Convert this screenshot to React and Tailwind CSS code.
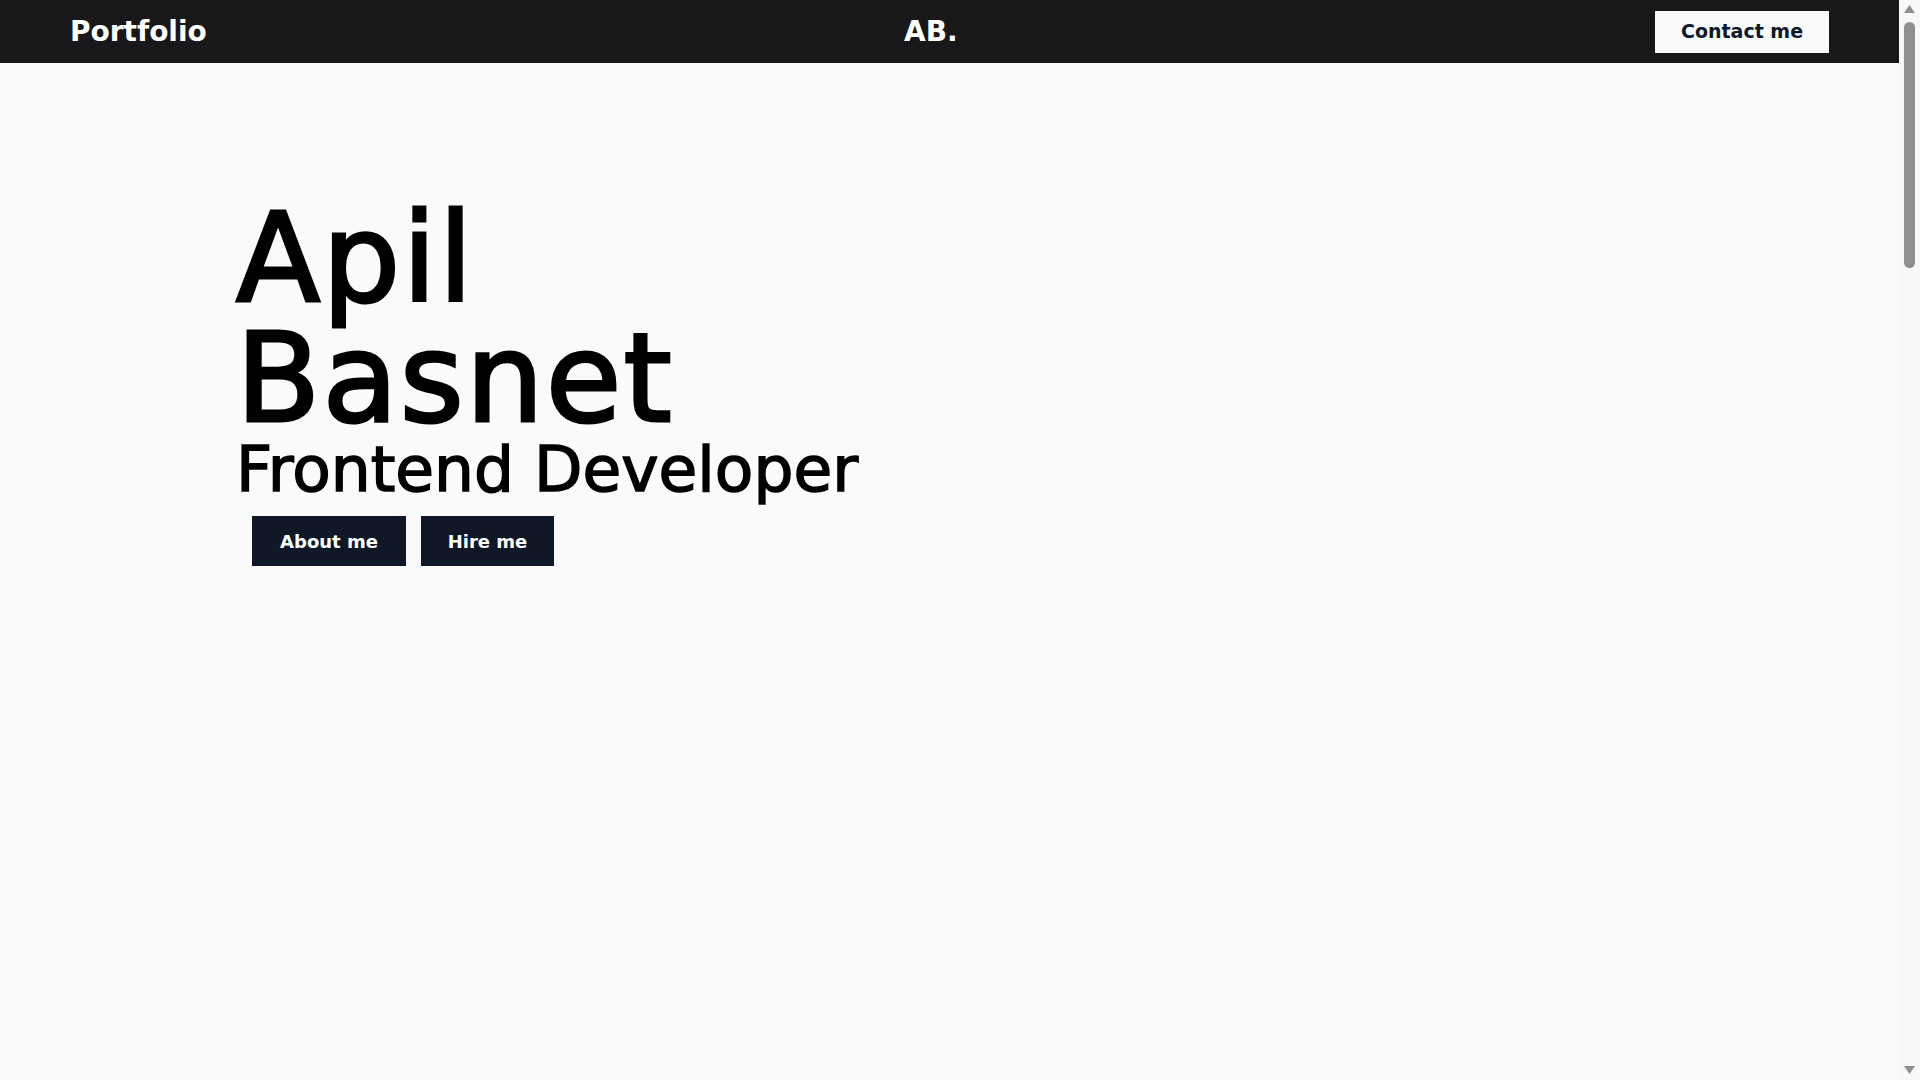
import React from "react";

const font = { fontFamily: '"DejaVu Sans", "Liberation Sans", sans-serif' };

function Navbar() {
  return (
    <nav className="h-[63px] bg-[#18181b] px-[70px] flex items-center justify-between">
      <a href="#" className="text-[28px] font-bold text-white leading-none">
        Portfolio
      </a>
      <span className="text-[28px] font-bold text-white leading-none">AB.</span>
      <button className="w-[174px] h-[42px] bg-slate-50 text-gray-900 text-[19px] font-bold">
        Contact me
      </button>
    </nav>
  );
}

function Hero() {
  return (
    <section className="pl-[236px] pt-[136px]">
      <h1 className="text-[123px] leading-[120px] tracking-[2px] text-black font-normal [-webkit-text-stroke:3px_#000]">
        Apil
        <br />
        Basnet
      </h1>
      <h2 className="text-[63px] leading-[62px] text-black font-normal [-webkit-text-stroke:1.5px_#000]">
        Frontend Developer
      </h2>
      <div className="mt-[15px] ml-4 flex gap-[15px]">
        <button className="h-[50px] w-[154px] bg-gray-900 text-white text-[18px] font-bold">
          About me
        </button>
        <button className="h-[50px] w-[133px] bg-gray-900 text-white text-[18px] font-bold">
          Hire me
        </button>
      </div>
    </section>
  );
}

// page scrollbar, as it shows in the screenshot
function Scrollbar() {
  return (
    <aside className="w-[21px] shrink-0 bg-[#f8f8f8] flex flex-col items-center pt-[5px] pb-[6px]">
      <svg width="11" height="8" viewBox="0 0 11 8">
        <path d="M5.5 0 L11 8 L0 8 Z" fill="#8f8f8f" />
      </svg>
      <div className="mt-[9px] w-[11px] h-[246px] rounded-full bg-[#8f8f8f]" />
      <div className="flex-1" />
      <svg width="11" height="8" viewBox="0 0 11 8">
        <path d="M0 0 L11 0 L5.5 8 Z" fill="#8f8f8f" />
      </svg>
    </aside>
  );
}

export default function App() {
  return (
    <div className="h-screen flex overflow-hidden bg-slate-50" style={font}>
      <main className="flex-1 min-w-0">
        <Navbar />
        <Hero />
      </main>
      <Scrollbar />
    </div>
  );
}
